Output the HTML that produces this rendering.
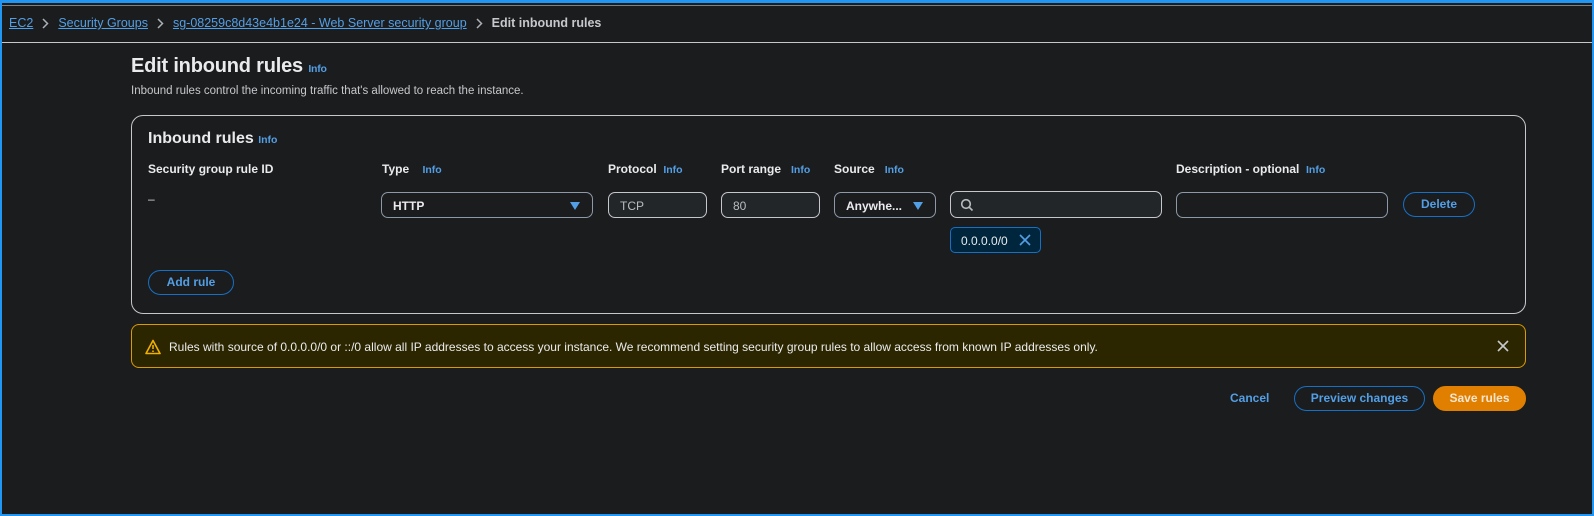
<!DOCTYPE html>
<html><head><meta charset="utf-8"><style>
*{box-sizing:border-box;margin:0;padding:0}
body{width:1594px;height:516px;background:#1b1c1e;font-family:"Liberation Sans",sans-serif;color:#d5dbdb;position:relative;overflow:hidden}
.frame{position:absolute;inset:0;border:2px solid #2196f3;border-top-width:3px;pointer-events:none}
.abs{position:absolute;white-space:nowrap}
.hl{position:absolute;left:2px;right:2px;height:1px}
a{color:#539fe5}
.crumb{top:16px;font-size:12.5px}
.crumb a{text-decoration:underline}
.chev{display:inline-block;vertical-align:middle;margin:0 9px}
.info{color:#539fe5;font-size:10.5px;font-weight:bold}
.lbl{font-size:12px;font-weight:bold;color:#e9ebed;top:162px}
.inp{position:absolute;height:26px;border:1px solid #8d99a8;border-radius:7px;background:#1b1c1e;font-size:12px;color:#e9ebed;padding:6px 11px}
.ro{background:#232629;border-color:#c6c6cd;color:#b8bcc0}
.tri{position:absolute;right:12px;top:9px}
.btn{position:absolute;height:25px;border:1px solid #1670c5;border-radius:14px;color:#539fe5;font-weight:bold;font-size:12px;text-align:center;line-height:23px}
</style></head><body>
<div class="hl" style="top:5px;background:#7d8083"></div>
<div class="hl" style="top:42px;background:#c6c6cd"></div>
<div class="abs crumb" style="left:9px"><a>EC2</a><svg class="chev" width="7" height="11" viewBox="0 0 7 11"><path d="M1 1L5.5 5.5L1 10" fill="none" stroke="#aab0b5" stroke-width="1.5"/></svg><a>Security Groups</a><svg class="chev" width="7" height="11" viewBox="0 0 7 11"><path d="M1 1L5.5 5.5L1 10" fill="none" stroke="#aab0b5" stroke-width="1.5"/></svg><a>sg-08259c8d43e4b1e24 - Web Server security group</a><svg class="chev" width="7" height="11" viewBox="0 0 7 11"><path d="M1 1L5.5 5.5L1 10" fill="none" stroke="#aab0b5" stroke-width="1.5"/></svg><b style="color:#c6c9cc">Edit inbound rules</b></div>
<div class="abs" style="left:131px;top:55px;font-size:20px;font-weight:bold;color:#e9ebed;letter-spacing:-0.2px">Edit inbound rules <span class="info">Info</span></div>
<div class="abs" style="left:131px;top:85px;font-size:11.5px;color:#c6c9cc">Inbound rules control the incoming traffic that's allowed to reach the instance.</div>
<div style="position:absolute;left:131px;top:115px;width:1395px;height:199px;border:1px solid #c6c6cd;border-radius:12px"></div>
<div class="abs" style="left:148px;top:130px;font-size:16px;font-weight:bold;color:#e9ebed">Inbound rules <span class="info">Info</span></div>
<div class="abs lbl" style="left:148px">Security group rule ID</div>
<div class="abs lbl" style="left:382px">Type &nbsp;&nbsp;&nbsp;<span class="info">Info</span></div>
<div class="abs lbl" style="left:608px">Protocol &nbsp;<span class="info">Info</span></div>
<div class="abs lbl" style="left:721px">Port range &nbsp;&nbsp;<span class="info">Info</span></div>
<div class="abs lbl" style="left:834px">Source &nbsp;&nbsp;<span class="info">Info</span></div>
<div class="abs lbl" style="left:1176px">Description - optional &nbsp;<span class="info">Info</span></div>
<div class="abs" style="left:148px;top:192px;font-size:12px">–</div>
<div class="inp" style="left:381px;top:192px;width:212px;font-weight:bold">HTTP<svg class="tri" width="10" height="8" viewBox="0 0 10 8"><path d="M0 0H10L5 8Z" fill="#539fe5"/></svg></div>
<div class="inp ro" style="left:608px;top:192px;width:99px">TCP</div>
<div class="inp ro" style="left:721px;top:192px;width:99px">80</div>
<div class="inp" style="left:834px;top:192px;width:102px;font-weight:bold;padding-left:11px">Anywhe...<svg class="tri" width="10" height="8" viewBox="0 0 10 8"><path d="M0 0H10L5 8Z" fill="#539fe5"/></svg></div>
<div class="inp ro" style="left:950px;top:191px;width:212px;height:27px;background:#232629"><svg width="14" height="14" viewBox="0 0 14 14" style="position:absolute;left:9px;top:6px"><circle cx="6" cy="6" r="4.3" fill="none" stroke="#b8bcc0" stroke-width="1.6"/><path d="M9.2 9.2L12.5 12.5" stroke="#b8bcc0" stroke-width="1.6"/></svg></div>
<div class="inp" style="left:1176px;top:192px;width:212px"></div>
<div class="btn" style="left:1403px;top:192px;width:72px">Delete</div>
<div style="position:absolute;left:950px;top:227px;width:91px;height:26px;border:1px solid #1670c5;border-radius:5px;background:#00263d;font-size:12px;color:#e9ebed;padding:6px 10px">0.0.0.0/0<svg width="12" height="12" viewBox="0 0 12 12" style="position:absolute;right:9px;top:6px"><path d="M1 1L11 11M11 1L1 11" stroke="#539fe5" stroke-width="1.6"/></svg></div>
<div class="btn" style="left:148px;top:270px;width:86px">Add rule</div>
<div style="position:absolute;left:131px;top:324px;width:1395px;height:44px;border:1px solid #db9a00;border-radius:8px;background:#2c2600"></div>
<svg class="abs" width="16" height="16" viewBox="0 0 16 16" style="left:145px;top:339px"><path d="M8 1.5L15 14.5H1Z" fill="none" stroke="#f2b000" stroke-width="1.6" stroke-linejoin="round"/><path d="M8 6V10M8 11.5V13" stroke="#f2b000" stroke-width="1.6"/></svg>
<div class="abs" style="left:169px;top:340px;font-size:12px;color:#e9ebed">Rules with source of 0.0.0.0/0 or ::/0 allow all IP addresses to access your instance. We recommend setting security group rules to allow access from known IP addresses only.</div>
<svg class="abs" width="12" height="12" viewBox="0 0 12 12" style="left:1497px;top:340px"><path d="M1 1L11 11M11 1L1 11" stroke="#c6c9cc" stroke-width="1.6"/></svg>
<div class="abs" style="left:1230px;top:391px;font-size:12px;font-weight:bold;color:#539fe5">Cancel</div>
<div class="btn" style="left:1294px;top:386px;width:131px">Preview changes</div>
<div class="btn" style="left:1433px;top:386px;width:93px;background:#e07f00;border-color:#e07f00;color:#f5e6d0">Save rules</div>
<div class="frame"></div>
</body></html>
